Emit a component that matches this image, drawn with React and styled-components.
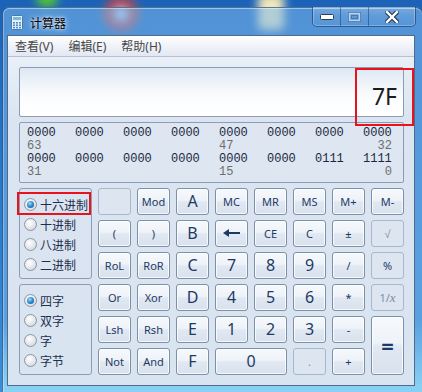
import React from "react";
import styled, { createGlobalStyle } from "styled-components";

const GlobalStyle = createGlobalStyle`
  html, body { margin: 0; padding: 0; }
  body {
    width: 422px;
    height: 392px;
    overflow: hidden;
    font-family: "Noto Sans", "Noto Sans CJK SC", sans-serif;
  }
`;

const Desktop = styled.div`
  position: relative;
  width: 422px;
  height: 392px;
  overflow: hidden;
  box-sizing: border-box;
  padding: 7px 0 0 2px;
  background: linear-gradient(180deg, #1c63b8 0%, #2676c9 40%, #3a8fd8 100%);
`;

// blurred desktop icons seen through the glass frame
const Blob = styled.div`
  position: absolute;
  border-radius: 50%;
  filter: blur(${(p) => p.$blur}px);
  background: ${(p) => p.$bg};
`;

const Window = styled.div`
  position: relative;
  z-index: 1;
  width: 421px;
  height: 392px;
  box-sizing: border-box;
  border: 1px solid rgba(20, 45, 85, 0.55);
  border-bottom: none;
  border-radius: 7px 7px 0 0;
  padding: 0 6px 0 4px;
  background: linear-gradient(
    180deg,
    rgba(125, 185, 238, 0.55) 0%,
    rgba(120, 182, 236, 0.55) 80%,
    rgba(150, 220, 248, 0.85) 97%
  );
  box-shadow: inset 0 1px 0 rgba(255, 255, 255, 0.45), inset 1px 0 0 rgba(255, 255, 255, 0.3);
  display: flex;
  flex-direction: column;
`;

const TitleBar = styled.div`
  height: 27px;
  display: flex;
  align-items: flex-start;
`;

const AppIcon = styled.svg`
  width: 12px;
  height: 15px;
  margin: 7px 0 0 4px;
`;

const Title = styled.div`
  margin: 7px 0 0 7px;
  font-size: 12px;
  line-height: 15px;
  color: #000;
  font-family: "Noto Sans CJK SC", sans-serif;
  text-shadow: 0 0 6px rgba(255, 255, 255, 0.9), 0 0 3px rgba(255, 255, 255, 0.9);
`;

const Caption = styled.div`
  margin-left: auto;
  margin-right: 0;
  margin-top: -1px;
  height: 19px;
  display: flex;
  border: 1px solid rgba(20, 45, 85, 0.55);
  border-top: none;
  border-radius: 0 0 5px 5px;
  overflow: hidden;
  box-shadow: inset 0 0 0 1px rgba(255, 255, 255, 0.25);
`;

const CapBtn = styled.div`
  width: ${(p) => p.$w}px;
  display: flex;
  align-items: center;
  justify-content: center;
  background: linear-gradient(180deg, rgba(255, 255, 255, 0.22) 0%, rgba(255, 255, 255, 0.08) 50%, rgba(255, 255, 255, 0.02) 100%);
  & + & {
    border-left: 1px solid rgba(20, 45, 85, 0.45);
  }
`;

const Client = styled.div`
  width: 408px;
  height: 351px;
  box-sizing: border-box;
  border: 1px solid rgba(35, 65, 105, 0.75);
  display: flex;
  flex-direction: column;
  background: #d9e4f1;
`;

const MenuBar = styled.div`
  height: 20px;
  border-bottom: 1px solid #b8c0d2;
  background: linear-gradient(180deg, #ffffff 0%, #f3f5fa 40%, #e2e7f2 100%);
  display: flex;
  align-items: center;
  gap: 15px;
  padding-left: 7px;
`;

const MenuItem = styled.span`
  font-size: 12px;
  color: #474747;
  font-family: "Noto Sans", "Noto Sans CJK SC", sans-serif;
`;

const Body = styled.div`
  flex: 1;
  padding: 10px 10px 0 11px;
  display: flex;
  flex-direction: column;
  gap: 5px;
  background: linear-gradient(180deg, #e9eff7 0%, #dbe5f1 60px, #d9e4f1 100%);
`;

const Display = styled.div`
  position: relative;
  height: 50px;
  box-sizing: border-box;
  border: 1px solid #8d9cb5;
  border-radius: 2px;
  background: linear-gradient(180deg, #dde7f3 0%, #eef3f9 30%, #fbfcfe 60%, #ffffff 100%);
  display: flex;
  align-items: flex-end;
  justify-content: flex-end;
  padding: 0 6px 7px 0;
`;

const Value = styled.div`
  font-size: 23px;
  line-height: 26px;
  color: #1c1c1c;
  font-family: "Noto Sans", sans-serif;
`;

const Mark = styled.div`
  position: absolute;
  z-index: 3;
  box-sizing: border-box;
  border: 2px solid #e8141c;
  left: ${(p) => p.$x}px;
  top: ${(p) => p.$y}px;
  width: ${(p) => p.$w}px;
  height: ${(p) => p.$h}px;
`;

const Bits = styled.div`
  height: 61px;
  box-sizing: border-box;
  border: 1px solid #8d9cb5;
  border-radius: 2px;
  background: #dde6f1;
  padding: 4px 0 0 7px;
  display: grid;
  grid-template-columns: repeat(8, 29px);
  column-gap: 19px;
  grid-auto-rows: 13px;
  font-family: "Liberation Mono", "DejaVu Sans Mono", monospace;
  font-size: 12px;
  line-height: 13px;
`;

const Nibble = styled.span`
  color: #1b2940;
  white-space: nowrap;
`;

const BitLabel = styled.span`
  color: #6d6d6d;
  grid-column: ${(p) => p.$col};
  text-align: ${(p) => (p.$right ? "right" : "left")};
`;

const Pad = styled.div`
  display: grid;
  grid-template-columns: 73px repeat(8, 33px);
  grid-template-rows: repeat(6, 27px);
  column-gap: 6px;
  row-gap: 5px;
`;

const RadioGroup = styled.div`
  position: relative;
  grid-column: 1;
  grid-row: ${(p) => p.$row} / span 3;
  border: 1px solid #8d9cb5;
  border-radius: 3px;
  padding: 5px 0 0 4px;
  display: flex;
  flex-direction: column;
`;

const RadioItem = styled.label`
  height: 20px;
  display: flex;
  align-items: center;
  gap: 2px;
  font-size: 12px;
  color: #1e2f4d;
  font-family: "Noto Sans CJK SC", sans-serif;
  white-space: nowrap;
`;

const Circle = styled.span`
  position: relative;
  width: 11px;
  height: 11px;
  border-radius: 50%;
  border: 1px solid #8e97a4;
  background: radial-gradient(circle at 40% 35%, #ffffff 0%, #e3e6ea 55%, #c4c9d0 100%);
  margin-right: 1px;
  &::after {
    content: "";
    display: ${(p) => (p.$on ? "block" : "none")};
    position: absolute;
    left: 2px;
    top: 2px;
    width: 7px;
    height: 7px;
    border-radius: 50%;
    background: radial-gradient(circle at 40% 35%, #9fe3ff 0%, #2f8fd0 45%, #134f8e 100%);
  }
`;

const Key = styled.div`
  grid-column: span ${(p) => p.$w || 1};
  grid-row: span ${(p) => p.$h || 1};
  box-sizing: border-box;
  border: 1px solid ${(p) => (p.$off ? "#a9b7cb" : "#7f8fa8")};
  border-radius: 3px;
  background: ${(p) =>
    p.$off
      ? "#dce5f0"
      : "linear-gradient(180deg, #f6f9fc 0%, #eef3f9 45%, #e0e8f2 52%, #d8e1ed 100%)"};
  box-shadow: ${(p) => (p.$off ? "none" : "inset 0 0 0 1px rgba(255,255,255,0.75)")};
  display: flex;
  align-items: center;
  justify-content: center;
  color: ${(p) => (p.$dim ? "#7d8ba3" : "#1e3a64")};
  font-family: "Noto Sans", sans-serif;
  font-size: ${(p) => p.$fs || 11}px;
  font-weight: ${(p) => (p.$bold ? 700 : 400)};
  line-height: 1;
  padding-bottom: 1px;
`;

const Italic = styled.i`
  font-family: "Liberation Serif", serif;
  font-size: 13px;
`;

const MinGlyph = () => (
  <svg width="14" height="6" viewBox="0 0 14 6">
    <rect x="0.5" y="0.5" width="13" height="5" rx="1" fill="#fff" stroke="#2b3d55" />
  </svg>
);

const MaxGlyph = () => (
  <svg width="13" height="10" viewBox="0 0 13 10">
    <rect x="0.5" y="0.5" width="12" height="9" fill="none" stroke="rgba(30,55,90,0.45)" />
    <rect x="1.5" y="1.5" width="10" height="7" fill="none" stroke="rgba(255,255,255,0.55)" strokeWidth="1.6" />
    <rect x="3.5" y="3.5" width="6" height="3" fill="none" stroke="rgba(30,55,90,0.35)" />
  </svg>
);

const CloseGlyph = () => (
  <svg width="14" height="12" viewBox="0 0 14 12">
    <path d="M2 1 L12 11 M12 1 L2 11" stroke="#2b3d55" strokeWidth="4.6" strokeLinecap="square" />
    <path d="M2 1 L12 11 M12 1 L2 11" stroke="#fff" strokeWidth="2.4" strokeLinecap="square" />
  </svg>
);

const BackArrow = () => (
  <svg width="17" height="8" viewBox="0 0 17 8">
    <path d="M5 4 H17" stroke="#1e3a64" strokeWidth="2" />
    <path d="M0 4 L6 0 L6 8 Z" fill="#1e3a64" />
  </svg>
);

const bitRows = [
  { nibbles: ["0000", "0000", "0000", "0000", "0000", "0000", "0000", "0000"], labels: ["63", "47", "32"] },
  { nibbles: ["0000", "0000", "0000", "0000", "0000", "0000", "0111", "1111"], labels: ["31", "15", "0"] },
];

const keys = [
  { t: "", off: true },
  { t: "Mod" },
  { t: "A", fs: 16 },
  { t: "MC" },
  { t: "MR" },
  { t: "MS" },
  { t: "M+" },
  { t: "M-" },
  { t: "(" },
  { t: ")" },
  { t: "B", fs: 16 },
  { t: "back" },
  { t: "CE" },
  { t: "C" },
  { t: "±" },
  { t: "√", off: true, dim: true },
  { t: "RoL" },
  { t: "RoR" },
  { t: "C", fs: 16 },
  { t: "7", fs: 16 },
  { t: "8", fs: 16 },
  { t: "9", fs: 16 },
  { t: "/" },
  { t: "%", off: true },
  { t: "Or" },
  { t: "Xor" },
  { t: "D", fs: 16 },
  { t: "4", fs: 16 },
  { t: "5", fs: 16 },
  { t: "6", fs: 16 },
  { t: "*" },
  { t: "inv", off: true, dim: true },
  { t: "Lsh" },
  { t: "Rsh" },
  { t: "E", fs: 16 },
  { t: "1", fs: 16 },
  { t: "2", fs: 16 },
  { t: "3", fs: 16 },
  { t: "-" },
  { t: "=", fs: 22, bold: true, h: 2 },
  { t: "Not" },
  { t: "And" },
  { t: "F", fs: 16 },
  { t: "0", fs: 16, w: 2 },
  { t: ".", off: true, dim: true },
  { t: "+" },
];

function keyLabel(t) {
  if (t === "back") return <BackArrow />;
  if (t === "inv") return <span>1/<Italic>x</Italic></span>;
  return t;
}

export default function App() {
  return (
    <>
      <GlobalStyle />
      <Desktop>
        <Blob $blur={4} $bg="#4fbf3a" style={{ left: 36, top: -10, width: 22, height: 18 }} />
        <Blob $blur={5} $bg="radial-gradient(circle, #f2f2f2 0 25%, #3d7fe0 26% 38%, #e43b2c 39% 70%, #f2c40f 71%)" style={{ left: 104, top: -2, width: 34, height: 32 }} />
        <Blob $blur={5} $bg="#f3e7b8" style={{ left: 258, top: -6, width: 26, height: 36, borderRadius: 4 }} />
        <Window>
          <TitleBar>
            <AppIcon viewBox="0 0 12 15">
              <rect x="0.5" y="0.5" width="11" height="14" rx="1" fill="#dff1fb" stroke="#4d7ba6" />
              <rect x="2" y="2" width="8" height="3" fill="#7fb7df" />
              {[0, 1, 2].map((r) =>
                [0, 1, 2].map((c) => (
                  <rect key={`${r}${c}`} x={2 + c * 3} y={7 + r * 2.4} width="2" height="1.6" fill="#5b8fc0" />
                ))
              )}
            </AppIcon>
            <Title>计算器</Title>
            <Caption>
              <CapBtn $w={27}><MinGlyph /></CapBtn>
              <CapBtn $w={27}><MaxGlyph /></CapBtn>
              <CapBtn $w={46}><CloseGlyph /></CapBtn>
            </Caption>
          </TitleBar>
          <Client>
            <MenuBar>
              <MenuItem>查看(V)</MenuItem>
              <MenuItem>编辑(E)</MenuItem>
              <MenuItem>帮助(H)</MenuItem>
            </MenuBar>
            <Body>
              <Display>
                <Value>7F</Value>
                <Mark $x={335} $y={0} $w={59} $h={58} />
              </Display>
              <Bits>
                {bitRows.map((row, i) => (
                  <React.Fragment key={i}>
                    {row.nibbles.map((n, j) => (
                      <Nibble key={j}>{n}</Nibble>
                    ))}
                    <BitLabel $col={1}>{row.labels[0]}</BitLabel>
                    <BitLabel $col={5}>{row.labels[1]}</BitLabel>
                    <BitLabel $col={8} $right>{row.labels[2]}</BitLabel>
                  </React.Fragment>
                ))}
              </Bits>
              <Pad>
                <RadioGroup $row={1}>
                  <RadioItem><Circle $on />十六进制</RadioItem>
                  <RadioItem><Circle />十进制</RadioItem>
                  <RadioItem><Circle />八进制</RadioItem>
                  <RadioItem><Circle />二进制</RadioItem>
                  <Mark $x={-3} $y={3} $w={74} $h={23} />
                </RadioGroup>
                <RadioGroup $row={4}>
                  <RadioItem><Circle $on />四字</RadioItem>
                  <RadioItem><Circle />双字</RadioItem>
                  <RadioItem><Circle />字</RadioItem>
                  <RadioItem><Circle />字节</RadioItem>
                </RadioGroup>
                {keys.map((k, i) => (
                  <Key key={i} $off={k.off} $dim={k.dim} $fs={k.fs} $bold={k.bold} $w={k.w} $h={k.h}>
                    {keyLabel(k.t)}
                  </Key>
                ))}
              </Pad>
            </Body>
          </Client>
        </Window>
      </Desktop>
    </>
  );
}
